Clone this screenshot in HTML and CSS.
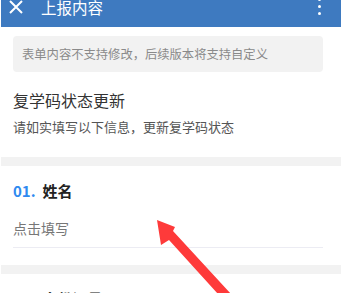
FILE: index.html
```html
<!DOCTYPE html>
<html lang="zh-CN">
<head>
<meta charset="utf-8">
<title>上报内容</title>
<link rel="stylesheet" href="styles.css">
</head>
<body>
<div class="page">
  <header class="appbar">
    <span class="close" aria-label="关闭">
      <svg width="14" height="14" viewBox="0 0 14 14"><path d="M1 1 L13 13 M13 1 L1 13" stroke="#fff" stroke-width="2" fill="none"/></svg>
    </span>
    <span class="appbar-title">上报内容</span>
    <span class="more" aria-label="更多"><i></i><i></i><i></i></span>
  </header>

  <div class="content">
    <div class="notice"><span class="notice-text">表单内容不支持修改，后续版本将支持自定义</span></div>
    <div class="intro">
      <div class="intro-title">复学码状态更新</div>
      <div class="intro-desc">请如实填写以下信息，更新复学码状态</div>
    </div>
  </div>

  <div class="band"></div>

  <div class="field">
    <div class="field-label"><span class="num">01.</span>姓名</div>
    <div class="field-input">点击填写</div>
  </div>

  <div class="band"></div>

  <div class="field">
    <div class="field-label"><span class="num">02.</span>身份证号</div>
    <div class="field-input">点击填写</div>
  </div>

  <svg class="arrow" width="341" height="293" viewBox="0 0 341 293">
    <polygon points="157,220 175,227 173,231 231,294 218,294 169,240 161,245" fill="#fe3a3a"/>
  </svg>
</div>
</body>
</html>
```

FILE: styles.css
```css
html, body {
  margin: 0;
  padding: 0;
  background: #fff;
}
body {
  font-family: "Noto Sans CJK SC", "Noto Sans", sans-serif;
  overflow: hidden;
  padding-left: 1px;
}
.page {
  position: relative;
  width: 340px;
  height: 293px;
  overflow: hidden;
}
.appbar {
  height: 41px;
  margin-top: -14px;
  background: #3e7ac0;
  display: flex;
  align-items: center;
  color: #fff;
}
.close {
  display: flex;
  margin-left: 8px;
  width: 14px;
  height: 14px;
}
.appbar-title {
  margin-left: 18px;
  font-size: 15.5px;
  line-height: 20px;
  flex: 1;
}
.more {
  display: flex;
  flex-direction: column;
  gap: 4px;
  margin-right: 20px;
}
.more i {
  display: block;
  width: 3px;
  height: 3px;
  border-radius: 50%;
  background: #fff;
}
.content {
  padding: 0 18px 0 12px;
}
.notice {
  margin-top: 9px;
  height: 36px;
  background: #f2f2f2;
  border-radius: 4px;
  padding-left: 9px;
  display: flex;
  align-items: center;
  color: #8a8a8a;
}
.notice-text {
  font-size: 12.3px;
  line-height: 18px;
}
.intro {
  padding-top: 17px;
  padding-bottom: 20px;
}
.intro-title {
  font-size: 16px;
  line-height: 22px;
  color: #333;
}
.intro-desc {
  margin-top: 6px;
  font-size: 13px;
  line-height: 20px;
  color: #555;
  white-space: nowrap;
}
.band {
  height: 9px;
  background: #f2f2f2;
}
.field {
  margin: 0 18px 0 12px;
  padding-top: 14px;
}
.field-label {
  font-size: 15px;
  line-height: 22px;
  font-weight: 700;
  color: #222;
}
.num {
  color: #2f8af0;
  margin-right: 7px;
}
.field-input {
  margin-top: 16px;
  font-size: 14px;
  line-height: 20px;
  color: #777;
  padding-bottom: 9px;
  border-bottom: 1px solid #ececf3;
  margin-bottom: 17px;
}
.arrow {
  position: absolute;
  left: -1px;
  top: 0;
  pointer-events: none;
}
```
